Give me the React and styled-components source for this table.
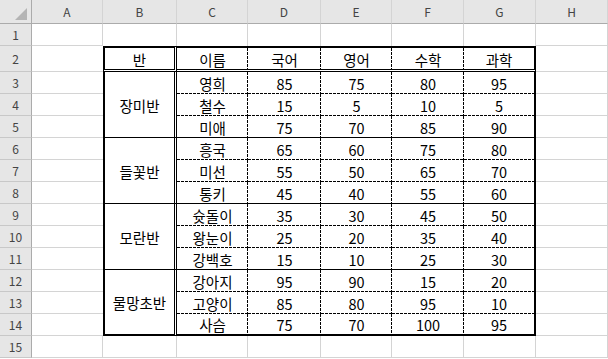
import React from 'react';
import styled, { createGlobalStyle, css } from 'styled-components';

const GRID = '#d4d4d4';
const HEAD_LINE = '#ababab';
const HEAD_BG = '#e6e6e6';
const THICK = '2px solid #000';
const DOUBLE = '3px double #000';
const THIN = '1px solid #000';

const GlobalStyle = createGlobalStyle`
  body {
    margin: 0;
    background: #fff;
    overflow: hidden;
    font-family: "Noto Sans CJK KR", "Noto Sans", sans-serif;
  }
`;

const Sheet = styled.div`
  display: grid;
  grid-template-columns: 32px 71px 74px 71px 73px 71px 72px 72px 72px;
  grid-template-rows: 24px 22px 26px repeat(13, 22px);
  width: 608px;
`;

const dashH = 'repeating-linear-gradient(to right, #000 0 3px, transparent 3px 4px)';
const dashV = 'repeating-linear-gradient(to bottom, #000 0 3px, transparent 3px 4px)';

const Cell = styled.div`
  box-sizing: border-box;
  display: flex;
  align-items: center;
  justify-content: center;
  white-space: nowrap;
  font-size: 14.5px;
  color: #000;
  padding-top: 1px;
  border-top: ${p => p.$t || 'none'};
  border-left: ${p => p.$l || 'none'};
  border-right: ${p => (p.$dashR ? 'none' : p.$r || `1px solid ${GRID}`)};
  border-bottom: ${p => (p.$dashB ? 'none' : p.$b || `1px solid ${GRID}`)};
  ${p => p.$span && css`grid-row: span ${p.$span};`}
  ${p => (p.$dashR || p.$dashB) && css`
    background-image: ${[p.$dashR && dashV, p.$dashB && dashH].filter(Boolean).join(', ')};
    background-repeat: no-repeat;
    background-position: ${[p.$dashR && 'right top', p.$dashB && 'left bottom'].filter(Boolean).join(', ')};
    background-size: ${[p.$dashR && '1px 100%', p.$dashB && '100% 1px'].filter(Boolean).join(', ')};
  `}
`;

const ColHead = styled.div`
  box-sizing: border-box;
  display: flex;
  align-items: center;
  justify-content: center;
  background: ${HEAD_BG};
  color: #444;
  font-size: 12px;
  border-right: 1px solid ${p => (p.$corner ? HEAD_LINE : GRID)};
  border-bottom: 1px solid ${HEAD_LINE};
  position: relative;
`;

const RowHead = styled.div`
  box-sizing: border-box;
  display: flex;
  align-items: center;
  justify-content: center;
  background: ${HEAD_BG};
  color: #444;
  font-size: 12px;
  border-right: 1px solid ${HEAD_LINE};
  border-bottom: 1px solid #c8c8c8;
`;

const Corner = styled.svg`
  position: absolute;
  left: 15px;
  top: 8px;
`;

const COLS = ['A', 'B', 'C', 'D', 'E', 'F', 'G', 'H'];
const HEADERS = ['이름', '국어', '영어', '수학', '과학'];

const groups = [
  { name: '장미반', rows: [['영희', 85, 75, 80, 95], ['철수', 15, 5, 10, 5], ['미애', 75, 70, 85, 90]] },
  { name: '들꽃반', rows: [['흥국', 65, 60, 75, 80], ['미선', 55, 50, 65, 70], ['통키', 45, 40, 55, 60]] },
  { name: '모란반', rows: [['슛돌이', 35, 30, 45, 50], ['왕눈이', 25, 20, 35, 40], ['강백호', 15, 10, 25, 30]] },
  { name: '물망초반', rows: [['강아지', 95, 90, 15, 20], ['고양이', 85, 80, 95, 10], ['사슴', 75, 70, 100, 95]] },
];

const App = () => {
  const cells = [];

  // column headers
  cells.push(
    <ColHead key="corner" $corner>
      <Corner width="12" height="12" viewBox="0 0 12 12">
        <polygon points="12,0 12,12 0,12" fill="#b4b4b4" />
      </Corner>
    </ColHead>
  );
  COLS.forEach(c => cells.push(<ColHead key={'h' + c}>{c}</ColHead>));

  // row 1
  cells.push(<RowHead key="r1">1</RowHead>);
  cells.push(<Cell key="1A" />);
  for (let i = 0; i < 6; i++) cells.push(<Cell key={'1x' + i} $b="none" />);
  cells.push(<Cell key="1H" />);

  // row 2 (table header)
  cells.push(<RowHead key="r2">2</RowHead>);
  cells.push(<Cell key="2A" $r="none" />);
  cells.push(<Cell key="2B" $t={THICK} $l={THICK} $r={DOUBLE} $b={DOUBLE}>반</Cell>);
  HEADERS.forEach((h, i) => (
    cells.push(
      <Cell
        key={'2' + h}
        $t={THICK}
        $b={DOUBLE}
        $r={i === HEADERS.length - 1 ? THICK : undefined}
        $dashR={i < HEADERS.length - 1}
      >{h}</Cell>
    )
  ));
  cells.push(<Cell key="2H" />);

  // data rows
  let rowNo = 3;
  groups.forEach((g, gi) => {
    const lastGroup = gi === groups.length - 1;
    g.rows.forEach((row, ri) => {
      const lastRow = ri === g.rows.length - 1;
      cells.push(<RowHead key={'r' + rowNo}>{rowNo}</RowHead>);
      cells.push(<Cell key={rowNo + 'A'} $r="none" />);
      if (ri === 0) {
        cells.push(
          <Cell key={rowNo + 'B'} $span={3} $l={THICK} $r={DOUBLE} $b={lastGroup ? THICK : THIN}>
            {g.name}
          </Cell>
        );
      }
      row.forEach((v, ci) => {
        const lastCol = ci === row.length - 1;
        let bottom;
        if (lastRow) bottom = lastGroup ? THICK : THIN;
        cells.push(
          <Cell
            key={rowNo + '-' + ci}
            $r={lastCol ? THICK : undefined}
            $dashR={!lastCol}
            $b={bottom}
            $dashB={!lastRow}
          >{v}</Cell>
        );
      });
      cells.push(<Cell key={rowNo + 'H'} />);
      rowNo++;
    });
  });

  // row 15
  cells.push(<RowHead key="r15">15</RowHead>);
  for (let i = 0; i < 8; i++) cells.push(<Cell key={'15-' + i} />);

  return (
    <>
      <GlobalStyle />
      <Sheet>{cells}</Sheet>
    </>
  );
};

export default App;
